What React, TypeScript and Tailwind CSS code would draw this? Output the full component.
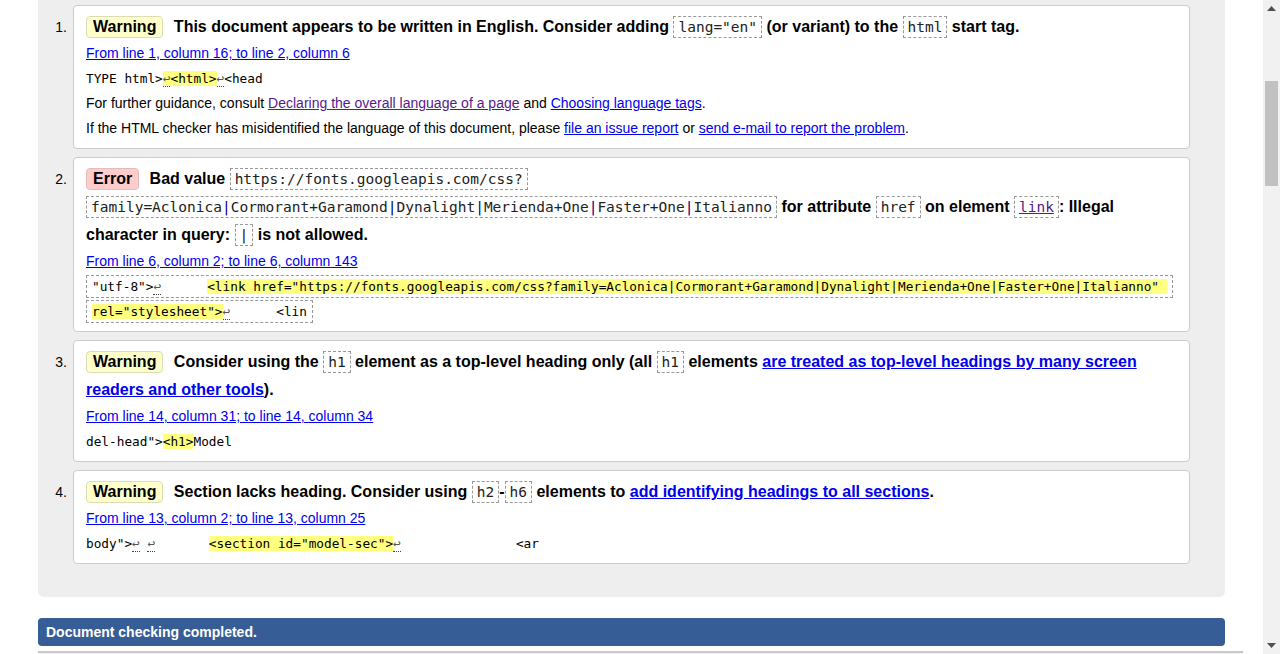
import type { ReactNode } from "react";

const SANS = "font-['Liberation_Sans',Arial,sans-serif]";
const MONO = "font-['DejaVu_Sans_Mono',monospace]";

function Badge({ kind }: { kind: "Warning" | "Error" }) {
  const tone =
    kind === "Warning"
      ? "bg-[#ffffcc] border-[#dcdcb4]"
      : "bg-[#ffcccc] border-[#e4bcbc]";
  return (
    <span
      className={`inline-block align-top mt-[3px] border ${tone} rounded-[4px] px-[6px] leading-[20px] mr-[6px] font-bold text-[16px] text-black`}
    >
      {kind}
    </span>
  );
}

// inline code inside the message line
function C({ children }: { children: ReactNode }) {
  return (
    <span
      className={`${MONO} box-decoration-clone border border-dashed border-[#999] px-[4px] py-[2px] leading-none text-[14.5px] font-normal text-[#222]`}
    >
      {children}
    </span>
  );
}

function Pipe() {
  return <span className="text-[#000080]">|</span>;
}

function NL() {
  return <span className="border-b border-dotted border-[#444] text-[#555]">↩</span>;
}

function Hl({ children }: { children: ReactNode }) {
  return <span className="bg-[#ffff80]">{children}</span>;
}

function Loc({ children }: { children: ReactNode }) {
  return (
    <p className="h-[25px] pt-[1px] leading-[25px] text-[14px]">
      <a href="#" className="text-[#0000ee] underline">
        {children}
      </a>
    </p>
  );
}

function Extract({ children, boxed, lines = 1 }: { children: ReactNode; boxed?: boolean; lines?: number }) {
  return (
    <p
      className={`${MONO} whitespace-pre pt-[1px] text-[12.75px] leading-[25px] text-black ${
        lines === 2 ? "h-[50px]" : "h-[25px]"
      }`}
    >
      <code
        className={`${MONO} ${
          boxed ? "box-decoration-clone border border-dashed border-[#999] px-[5px] py-[3px]" : ""
        }`}
      >
        {children}
      </code>
    </p>
  );
}

function Item({ n, children }: { n: number; children: ReactNode }) {
  return (
    <li className="flex">
      <span className="w-[35px] shrink-0 text-right pr-[6px] pt-[8px] leading-[28px] text-[14px] text-black">
        {n}.
      </span>
      <div className="flex-1 border border-[#cccccc] rounded-[4px] bg-white px-[12px] pt-[6px] pb-[8px]">
        {children}
      </div>
    </li>
  );
}

function Title({ children, lines = 1 }: { children: ReactNode; lines?: number }) {
  const h = lines === 3 ? "h-[84px]" : lines === 2 ? "h-[56px]" : "h-[28px]";
  return <p className={`${h} pt-[1px] font-bold text-[16px] leading-[28px] text-black`}>{children}</p>;
}

function Scrollbar() {
  return (
    <div className="w-[17px] shrink-0 bg-[#f1f1f1] flex flex-col">
      <div className="h-[17px] flex items-center justify-center">
        <svg width="9" height="5" viewBox="0 0 9 5">
          <path d="M0 5 L4.5 0 L9 5 Z" fill="#505050" />
        </svg>
      </div>
      <div className="mt-[64px] mx-[2px] h-[105px] bg-[#c1c1c1]" />
      <div className="flex-1" />
      <div className="h-[17px] flex items-center justify-center">
        <svg width="9" height="5" viewBox="0 0 9 5">
          <path d="M0 0 L9 0 L4.5 5 Z" fill="#505050" />
        </svg>
      </div>
    </div>
  );
}

export default function App() {
  return (
    <div className={`flex h-[654px] w-[1280px] overflow-hidden bg-white ${SANS}`}>
      <div className="w-[1263px] shrink-0">
        <div className="ml-[38px] w-[1187px] bg-[#eeeeee] rounded-b-[6px] pt-[5px] pb-[33px] pr-[35px]">
          <ol className="flex flex-col gap-[8px]">
            <Item n={1}>
              <Title>
                <Badge kind="Warning" />
                {" "}This document appears to be written in English. Consider adding <C>lang="en"</C> (or
                variant) to the <C>html</C> start tag.
              </Title>
              <Loc>From line 1, column 16; to line 2, column 6</Loc>
              <Extract>
                {"TYPE html>"}
                <Hl>
                  <NL />
                  {"<html>"}
                </Hl>
                <NL />
                {"<head"}
              </Extract>
              <p className="h-[25px] pt-[1px] leading-[25px] text-[14px] text-black">
                For further guidance, consult{" "}
                <a href="#" className="text-[#551a8b] underline">
                  Declaring the overall language of a page
                </a>{" "}
                and{" "}
                <a href="#" className="text-[#0000ee] underline">
                  Choosing language tags
                </a>
                .
              </p>
              <p className="h-[25px] pt-[1px] leading-[25px] text-[14px] text-black">
                If the HTML checker has misidentified the language of this document, please{" "}
                <a href="#" className="text-[#0000ee] underline">
                  file an issue report
                </a>{" "}
                or{" "}
                <a href="#" className="text-[#0000ee] underline">
                  send e-mail to report the problem
                </a>
                .
              </p>
            </Item>

            <Item n={2}>
              <Title lines={3}>
                <Badge kind="Error" />
                {" "}Bad value{" "}
                <C>
                  https://fonts.googleapis.com/css?
                  <br />
                  family=Aclonica<Pipe />Cormorant+Garamond<Pipe />Dynalight<Pipe />Merienda+One<Pipe />
                  Faster+One<Pipe />Italianno
                </C>{" "}
                for attribute <C>href</C> on element{" "}
                <C>
                  <a href="#" className="text-[#551a8b] underline">
                    link
                  </a>
                </C>
                : Illegal
                <br />
                character in query: <C>|</C> is not allowed.
              </Title>
              <Loc>From line 6, column 2; to line 6, column 143</Loc>
              <Extract boxed lines={2}>
                {'"utf-8">'}
                <NL />
                {"      "}
                <Hl>
                  {
                    '<link href="https://fonts.googleapis.com/css?family=Aclonica|Cormorant+Garamond|Dynalight|Merienda+One|Faster+One|Italianno" '
                  }
                  <br />
                  {'rel="stylesheet">'}
                </Hl>
                <NL />
                {"      <lin"}
              </Extract>
            </Item>

            <Item n={3}>
              <Title lines={2}>
                <Badge kind="Warning" />
                {" "}Consider using the <C>h1</C> element as a top-level heading only (all <C>h1</C>{" "}
                elements{" "}
                <a href="#" className="text-[#0000ee] underline">
                  are treated as top-level headings by many screen
                  <br />
                  readers and other tools
                </a>
                ).
              </Title>
              <Loc>From line 14, column 31; to line 14, column 34</Loc>
              <Extract>
                {'del-head">'}
                <Hl>{"<h1>"}</Hl>
                {"Model"}
              </Extract>
            </Item>

            <Item n={4}>
              <Title>
                <Badge kind="Warning" />
                {" "}Section lacks heading. Consider using <C>h2</C>-<C>h6</C> elements to{" "}
                <a href="#" className="text-[#0000ee] underline">
                  add identifying headings to all sections
                </a>
                .
              </Title>
              <Loc>From line 13, column 2; to line 13, column 25</Loc>
              <Extract>
                {'body">'}
                <NL />
                {" "}
                <NL />
                {"       "}
                <Hl>{'<section id="model-sec">'}</Hl>
                <NL />
                {"               <ar"}
              </Extract>
            </Item>
          </ol>
        </div>

        <div className="mt-[21px] ml-[38px] w-[1187px] h-[28px] rounded-[4px] bg-[#365d95] pl-[8px] flex items-center">
          <span className="text-white font-bold text-[14px]">Document checking completed.</span>
        </div>

        <div className="mt-[5px] ml-[38px] w-[1205px] h-[10px] border-t-2 border-[#c8c8c8] bg-[#eeeeee]" />
      </div>
      <Scrollbar />
    </div>
  );
}
